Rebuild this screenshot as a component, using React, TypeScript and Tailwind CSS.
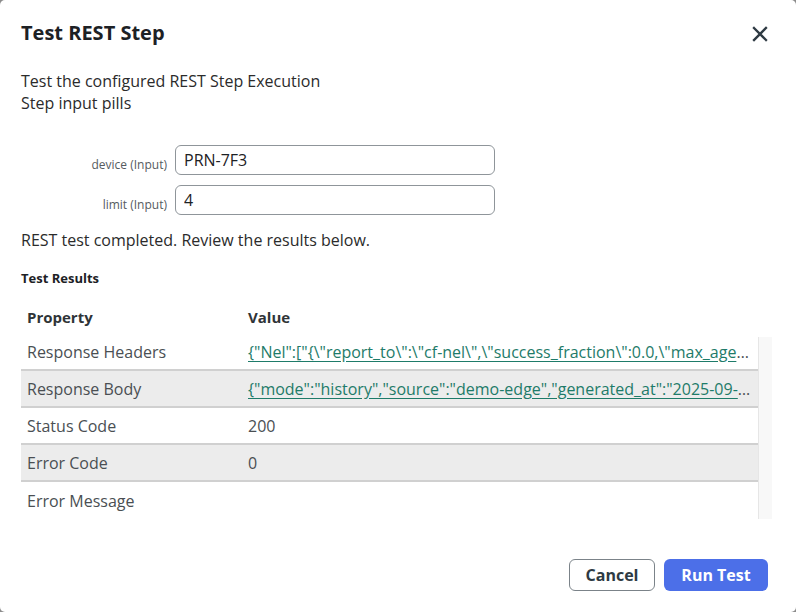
import React from 'react';

const rows = [
  {
    name: 'Response Headers',
    value:
      '{"Nel":["{\\"report_to\\":\\"cf-nel\\",\\"success_fraction\\":0.0,\\"max_age\\":604800}"],"Report-To":["{\\"endpoints\\":[{\\"url\\":\\"https://a.nel.cloudflare.com/report\\"}]}"]}',
    link: true,
  },
  {
    name: 'Response Body',
    value:
      '{"mode":"history","source":"demo-edge","generated_at":"2025-09-14T10:22:31Z","device":"PRN-7F3","items":[]}',
    link: true,
  },
  { name: 'Status Code', value: '200', link: false },
  { name: 'Error Code', value: '0', link: false },
  { name: 'Error Message', value: '', link: false },
];

const inputs = [
  { label: 'device (Input)', value: 'PRN-7F3' },
  { label: 'limit (Input)', value: '4' },
];

const App: React.FC = () => {
  return (
    <div className="h-[612px] w-[796px] bg-[#8c8c8c] font-['Open_Sans',sans-serif]">
      <div className="flex h-full flex-col rounded-[5px] bg-white">
        {/* Header */}
        <div className="flex items-start justify-between pl-[21px] pr-[28px] pt-[21px]">
          <h2 className="text-[20px] font-bold leading-[24px] text-[#1d2125]">Test REST Step</h2>
          <button className="mt-[5px] text-[#2e3a43]" aria-label="Close">
            <svg width="16" height="16" viewBox="0 0 16 16" fill="none" stroke="currentColor" strokeWidth="2.3" strokeLinecap="square">
              <path d="M2 2l12 12M14 2L2 14" />
            </svg>
          </button>
        </div>

        {/* Body */}
        <div className="flex flex-1 flex-col pl-[21px] pr-[24px]">
          <p className="mt-[25px] text-[16px] leading-[22px] text-[#2b2b2b]">
            Test the configured REST Step Execution
            <br />
            Step input pills
          </p>

          <div className="mt-[31px] flex flex-col gap-[10px]">
            {inputs.map((f) => (
              <div key={f.label} className="flex items-center gap-[8px]">
                <label className="w-[146px] pt-[9px] text-right text-[12px] leading-[16px] text-[#555b60]">{f.label}</label>
                <input
                  readOnly
                  value={f.value}
                  className="h-[30px] w-[320px] rounded-[6px] border border-[#8f959a] px-[8px] text-[16px] text-[#1d2125] outline-none"
                />
              </div>
            ))}
          </div>

          <p className="mt-[14px] text-[16px] leading-[22px] text-[#2b2b2b]">REST test completed. Review the results below.</p>

          <h3 className="mt-[19px] text-[13px] font-bold leading-[17px] text-[#1d2125]">Test Results</h3>

          {/* Results table */}
          <div className="mt-[13px] w-[751px]">
            <div className="flex h-[34px] items-center pr-[14px] text-[15px] font-bold text-[#2f3437]">
              <div className="w-[221px] pl-[6px]">Property</div>
              <div className="pl-[6px]">Value</div>
            </div>
            <div className="flex">
              <div className="min-w-0 flex-1">
                {rows.map((r, i) => (
                  <div
                    key={r.name}
                    className={`flex h-[37px] items-center text-[16px] text-[#4a4f53] ${i % 2 === 1 ? 'bg-[#ececec]' : 'bg-white'} ${i < rows.length - 1 ? 'border-b-2 border-[#d0d0d0]' : ''}`}
                  >
                    <div className="w-[221px] shrink-0 pl-[6px]">{r.name}</div>
                    <div className="min-w-0 flex-1 truncate pl-[6px] pr-[6px]">
                      {r.link ? (
                        <a href="#" className="text-[#1e7b69] underline underline-offset-[3px]">
                          {r.value}
                        </a>
                      ) : (
                        r.value
                      )}
                    </div>
                  </div>
                ))}
              </div>
              <div className="mt-[3px] w-[14px] border-l border-[#e6e6e6] bg-[#f8f8f8]" />
            </div>
          </div>
        </div>

        {/* Footer */}
        <div className="flex justify-end gap-[9px] pb-[21px] pr-[28px]">
          <button className="h-[32px] w-[86px] rounded-[6px] border border-[#7b8389] text-[16px] font-bold text-[#2e3a43]">
            Cancel
          </button>
          <button className="h-[32px] w-[104px] rounded-[6px] bg-[#4c6fe8] text-[16px] font-bold text-white">
            Run Test
          </button>
        </div>
      </div>
    </div>
  );
};

export default App;
